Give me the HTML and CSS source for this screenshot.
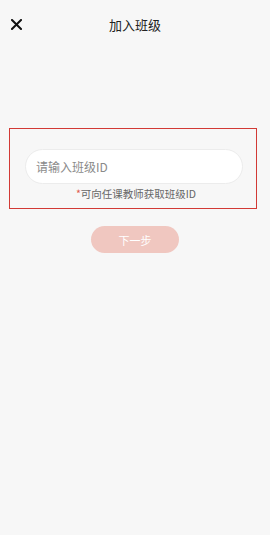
FILE: index.html
```html
<!DOCTYPE html>
<html lang="zh">
<head>
    <meta charset="UTF-8">
    <meta name="viewport" content="width=device-width, initial-scale=1.0">
    <title>加入班级</title>
    <link rel="stylesheet" href="styles.css">
</head>
<body>
    <div class="header">
        <span class="close">
            <svg width="11" height="11" viewBox="0 0 11 11"><path d="M1 1L10 10M10 1L1 10" stroke="#111" stroke-width="2" stroke-linecap="square"/></svg>
        </span>
        <h1>加入班级</h1>
    </div>

    <div class="box">
        <input type="text" class="class-id" placeholder="请输入班级ID">
        <p class="hint"><span class="star">*</span>可向任课教师获取班级ID</p>
    </div>

    <div class="actions">
        <button class="next">下一步</button>
    </div>
</body>
</html>
```

FILE: styles.css
```css
body {
    margin: 0;
    padding: 0;
    background-color: #f7f7f7;
    font-family: "Noto Sans CJK SC", "Noto Sans", sans-serif;
    color: #222;
}
.header {
    position: relative;
    height: 48px;
    display: flex;
    align-items: center;
    justify-content: center;
}
.close {
    position: absolute;
    left: 11px;
    top: 19px;
    line-height: 0;
}
h1 {
    margin: 0;
    font-size: 13px;
    font-weight: normal;
    color: #222;
}
.box {
    margin: 80px 13px 0 9px;
    height: 81px;
    box-sizing: border-box;
    border: 1.5px solid #d23a35;
    display: flex;
    flex-direction: column;
    align-items: center;
    padding-top: 20px;
}
.class-id {
    width: 218px;
    height: 35px;
    box-sizing: border-box;
    border: 1px solid #ececec;
    border-radius: 18px;
    background-color: #fff;
    padding: 0 10px;
    font-family: inherit;
    font-size: 12px;
    color: #333;
    outline: none;
    margin-left: 2px;
}
.class-id::placeholder {
    color: #8a8a8a;
}
.hint {
    margin: 2px 0 0 6px;
    font-size: 10.5px;
    color: #666;
}
.star {
    color: #e05a4f;
}
.actions {
    display: flex;
    justify-content: center;
    margin-top: 17px;
}
.next {
    width: 88px;
    height: 27px;
    border: none;
    border-radius: 14px;
    background-color: #f0c7c0;
    color: #fff;
    font-family: inherit;
    font-size: 11px;
}
```
